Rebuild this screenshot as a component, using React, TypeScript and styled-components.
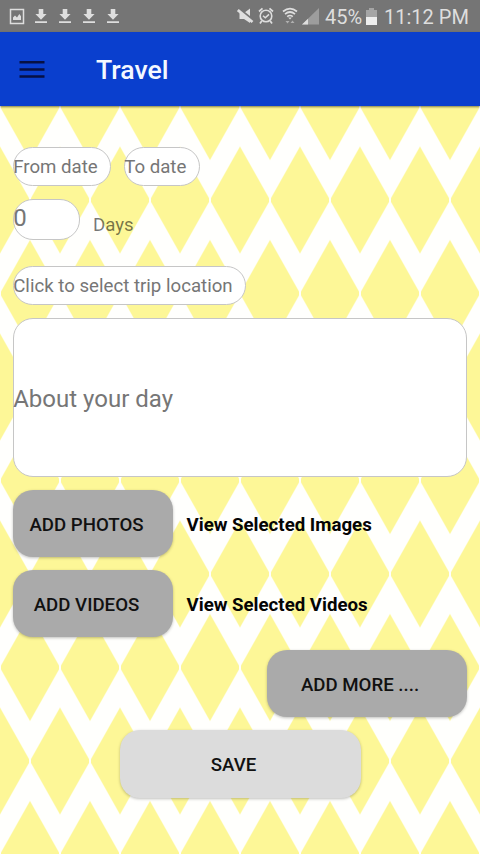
import React from "react";
import styled, { createGlobalStyle } from "styled-components";

const GlobalStyle = createGlobalStyle`
  *, *::before, *::after { box-sizing: border-box; }
  body { margin: 0; background: #fffffd; font-family: Roboto, "Liberation Sans", sans-serif; }
`;

const Screen = styled.div`
  position: relative;
  display: flex;
  flex-direction: column;
  width: 480px;
  height: 854px;
  overflow: hidden;
  isolation: isolate;
`;

const Backdrop = styled.svg`
  position: absolute;
  inset: 0;
  z-index: -1;
`;

const StatusBar = styled.div`
  display: flex;
  align-items: center;
  justify-content: space-between;
  height: 32px;
  padding: 0 11px 0 9px;
  background: #757575;
  color: #dedede;
`;

const Notifications = styled.div`
  display: flex;
  align-items: center;
  gap: 12px;
`;

const SystemInfo = styled.div`
  display: flex;
  align-items: center;
`;

const StatusIcon = styled.svg<{ $gap?: number }>`
  display: block;
  flex: none;
  margin-right: ${(p) => p.$gap ?? 0}px;
`;

const StatusText = styled.span<{ $width: number; $gap?: number }>`
  width: ${(p) => p.$width}px;
  margin-right: ${(p) => p.$gap ?? 0}px;
  padding-top: 2px;
  font-size: 20px;
  line-height: 24px;
  white-space: nowrap;
`;

const AppBar = styled.header`
  display: flex;
  align-items: center;
  gap: 51px;
  height: 74px;
  padding: 2px 19px 0;
  background: #0a3fce;
  box-shadow: 0 1px 2px rgba(60, 60, 30, 0.65);
`;

const Title = styled.h1`
  margin: 0;
  color: #f4f8ff;
  font-size: 26.67px;
  font-weight: 500;
  line-height: 32px;
`;

const MenuButton = styled.button`
  display: flex;
  padding: 0;
  border: 0;
  background: none;
`;

const Form = styled.main`
  display: flex;
  flex-direction: column;
  align-items: flex-start;
  gap: 13px;
  padding: 41px 13px 0;
`;

const Row = styled.div<{ $end?: boolean }>`
  display: flex;
  align-items: ${(p) => (p.$end ? "flex-end" : "center")};
  gap: 13px;
`;

const Field = styled.div<{ $w: number; $h?: number; $large?: boolean }>`
  display: flex;
  align-items: center;
  width: ${(p) => p.$w}px;
  height: ${(p) => p.$h ?? 39}px;
  padding-top: 2px;
  border: 1px solid #c6c6c6;
  border-radius: 20px;
  background: #fff;
  color: #767676;
  font-size: ${(p) => (p.$large ? 24 : 18.67)}px;
  line-height: 1;
  white-space: nowrap;
  text-indent: -0.8px;
`;

const DaysField = styled(Field)`
  padding: 0 0 3px;
`;

const DaysLabel = styled.span`
  padding-bottom: 4px;
  color: rgba(0, 0, 0, 0.54);
  font-size: 18.67px;
  line-height: 22px;
`;

const DaysRow = styled(Row)`
  margin-bottom: 13px;
`;

const AboutField = styled(Field)`
  padding-top: 3px;
`;

const Button = styled.button<{ $w: number; $light?: boolean; $shift?: number; $h?: number }>`
  width: ${(p) => p.$w}px;
  height: ${(p) => p.$h ?? 67}px;
  padding: 2px ${(p) => p.$shift ?? 0}px 0 0;
  border: 0;
  border-radius: 20px;
  background: ${(p) => (p.$light ? "#dcdcdc" : "#aaaaaa")};
  box-shadow: 0 1px 3px rgba(0, 0, 0, 0.25);
  color: #111;
  font-family: inherit;
  font-size: 18.67px;
  font-weight: 500;
  white-space: nowrap;
`;

const ViewLink = styled.span`
  padding: 2px 0 0 0.5px;
  color: #050505;
  font-size: 18.67px;
  font-weight: 700;
  white-space: nowrap;
`;

const MoreButton = styled(Button)`
  align-self: flex-end;
`;

const SaveButton = styled(Button)`
  align-self: center;
`;

const DownloadIcon = () => (
  <StatusIcon width="12" height="16" viewBox="0 0 12 16" fill="currentColor">
    <path d="M3.7 1h4.6v5h3.3L6 11.7.4 6h3.3zM0 13.2h12v1.7H0z" />
  </StatusIcon>
);

const DiamondBackdrop = () => (
  <Backdrop width="480" height="854">
    <defs>
      <pattern id="diamonds" width="60" height="187" y="106.5" patternUnits="userSpaceOnUse">
        <g fill="#fdf797">
          <path d="M30 -53.5 59 -2V2L30 53.5 1 2V-2z" />
          <path d="M30 133.5 59 185V189L30 240.5 1 189V185z" />
          <path d="M0 40 29 91.5V95.5L0 147 -29 95.5V91.5z" />
          <path d="M60 40 89 91.5V95.5L60 147 31 95.5V91.5z" />
        </g>
      </pattern>
    </defs>
    <rect width="480" height="854" fill="#fffffd" />
    <rect width="480" height="854" fill="url(#diamonds)" />
  </Backdrop>
);

export default function App() {
  return (
    <>
      <GlobalStyle />
      <Screen>
        <DiamondBackdrop />
        <StatusBar>
          <Notifications>
            <StatusIcon $gap={-2} width="16" height="17" viewBox="0 0 16 17" fill="none">
              <rect x="1.5" y="1.5" width="13" height="14" stroke="currentColor" strokeWidth="1.5" />
              <path d="M4 12V9.5l2-2 2 2L10.3 6 12 8.2V12z" fill="currentColor" />
            </StatusIcon>
            {[0, 1, 2, 3].map((n) => (
              <DownloadIcon key={n} />
            ))}
          </Notifications>
          <SystemInfo>
            <StatusIcon $gap={4} width="17" height="18" viewBox="0 0 17 18" fill="currentColor">
              <path d="M2.5 6H7l6-4.5v14.5L7 12H2.5z" />
              <path d="M1.5 1.5 16 13" stroke="#757575" strokeWidth="2.4" />
              <path d="M.8 3 15.5 15" stroke="currentColor" strokeWidth="2.8" />
            </StatusIcon>
            <StatusIcon $gap={8} width="16" height="18" viewBox="0 0 16 18" fill="none" stroke="currentColor">
              <circle cx="8" cy="9" r="5.8" strokeWidth="1.6" />
              <path d="M1 4.5 4.5 1.3M11.5 1.3 15 4.5M3.7 14 2 16.5M12.3 14l1.7 2.5" strokeWidth="1.7" />
              <path d="m5 8.7 2.3 2.1L11 7.4" strokeWidth="1.5" />
            </StatusIcon>
            <StatusIcon $gap={4} width="16" height="18" viewBox="0 0 16 18" fill="none" stroke="currentColor">
              <path d="M1 4.5Q8-1.3 15 4.5M3 7.1q5-4.2 10 0M5.2 9.6q2.8-2.2 5.6 0" strokeWidth="1.7" />
              <path d="m8 12.5-1.8-2h3.6z" fill="currentColor" stroke="none" />
              <path d="m3.5 14 2 2.5 2-2.5zM8.5 16l2-2.5 2 2.5z" fill="#b0b0b0" stroke="none" />
            </StatusIcon>
            <StatusIcon $gap={6} width="17" height="17" viewBox="0 0 17 17">
              <path d="M0 16.5 17 0v16.5z" fill="#9d9d9d" />
              <path d="M0 16.5 6 10.7v5.8z" fill="currentColor" />
            </StatusIcon>
            <StatusText $width={38} $gap={3}>45%</StatusText>
            <StatusIcon $gap={7} width="11" height="17" viewBox="0 0 11 17">
              <path d="M3 0h5v2h3v7H0V2h3z" fill="#a5a5a5" />
              <path d="M0 9h11v8H0z" fill="#eeeeee" />
            </StatusIcon>
            <StatusText $width={85}>11:12 PM</StatusText>
          </SystemInfo>
        </StatusBar>
        <AppBar>
          <MenuButton aria-label="Menu">
            <svg width="26" height="18" viewBox="0 0 26 18" fill="#071044">
              <path d="M.5 0h25v2.6H.5zM.5 7.2h25v2.6H.5zM.5 14.2h25v2.6H.5z" />
            </svg>
          </MenuButton>
          <Title>Travel</Title>
        </AppBar>
        <Form>
          <Row>
            <Field $w={98}>From date</Field>
            <Field $w={76}>To date</Field>
          </Row>
          <DaysRow $end>
            <DaysField $w={67} $h={41} $large>0</DaysField>
            <DaysLabel>Days</DaysLabel>
          </DaysRow>
          <Field $w={233}>Click to select trip location</Field>
          <AboutField $w={454} $h={159} $large>About your day</AboutField>
          <Row>
            <Button $w={160} $shift={13}>ADD PHOTOS</Button>
            <ViewLink>View Selected Images</ViewLink>
          </Row>
          <Row>
            <Button $w={160} $shift={13}>ADD VIDEOS</Button>
            <ViewLink>View Selected Videos</ViewLink>
          </Row>
          <MoreButton $w={200} $shift={14}>ADD MORE ....</MoreButton>
          <SaveButton $w={241} $shift={13} $h={68} $light>SAVE</SaveButton>
        </Form>
      </Screen>
    </>
  );
}
